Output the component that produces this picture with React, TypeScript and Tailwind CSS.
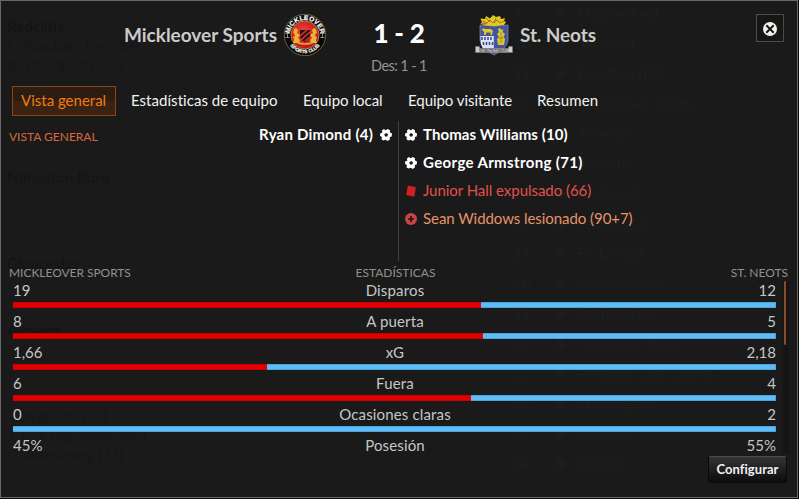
import clsx from 'clsx';

type Evento = {
  tipo: 'gol' | 'roja' | 'lesion';
  texto: string;
  className: string;
};

type Estadistica = {
  nombre: string;
  local: string;
  visitante: string;
  porcentaje: number | null;
};

const TABS = [
  { label: 'Vista general', className: 'w-[104px] pl-[8px]' },
  { label: 'Estadísticas de equipo', className: 'ml-[15px] w-[172px] tracking-[0.04px]' },
  { label: 'Equipo local', className: 'w-[105px]' },
  { label: 'Equipo visitante', className: 'w-[129px] tracking-[-0.05px]' },
  { label: 'Resumen', className: 'tracking-[0.15px]' },
];

const EVENTOS: Evento[] = [
  { tipo: 'gol', texto: 'Thomas Williams (10)', className: 'font-bold text-white tracking-[0.08px]' },
  { tipo: 'gol', texto: 'George Armstrong (71)', className: 'font-bold text-white tracking-[0.36px]' },
  { tipo: 'roja', texto: 'Junior Hall expulsado (66)', className: 'text-[#e2504c] tracking-[-0.04px]' },
  { tipo: 'lesion', texto: 'Sean Widdows lesionado (90+7)', className: 'text-[#e59468] tracking-[-0.06px]' },
];

const ESTADISTICAS: Estadistica[] = [
  { nombre: 'Disparos', local: '19', visitante: '12', porcentaje: (19 / 31) * 100 },
  { nombre: 'A puerta', local: '8', visitante: '5', porcentaje: (8 / 13) * 100 },
  { nombre: 'xG', local: '1,66', visitante: '2,18', porcentaje: (1 / 3) * 100 },
  { nombre: 'Fuera', local: '6', visitante: '4', porcentaje: 60 },
  { nombre: 'Ocasiones claras', local: '0', visitante: '2', porcentaje: 0 },
  { nombre: 'Posesión', local: '45%', visitante: '55%', porcentaje: null },
];

const CLASIFICACION = [
  'Macclesfield', 'Stratford', 'Bradford (PA)', 'Mickleover Sports', 'Alfreton', 'Radcliffe',
  'Nantwich', 'Leamington', 'FC United', 'South Shields', 'Scunthorpe', 'Nuneaton Boro',
  'Peterborough Sports', 'Warrington', 'Spalding', 'Chorley',
];

function Balon() {
  return (
    <svg width="12" height="12" viewBox="0 0 12 12" className="shrink-0">
      <path
        d="M3.900 0 5.600 1.300 7.800 0 10 1.200 9.800 3.200 12 4.600 11.700 7.400 9.800 8 9.900 10.500 7.600 12 5.800 10.700 3.400 11.500 1.400 10.300 2 8.200 0 6.800.3 4.300 2.300 3.800 1.900 1.500Z"
        fill="#fff"
      />
      <path d="M6.200 4 8 5.300 7.400 7.400H5L4.300 5.300Z" fill="#1a1a1a" />
    </svg>
  );
}

function IconoEvento({ tipo }: { tipo: Evento['tipo'] }) {
  if (tipo === 'gol') return <Balon />;
  if (tipo === 'roja') {
    return (
      <svg width="12" height="12" viewBox="0 0 12 12" className="shrink-0">
        <path d="M3 .5 10.900 2.200 9.200 11.700 1.200 10Z" fill="#d02020" />
      </svg>
    );
  }
  return (
    <svg width="12" height="12" viewBox="0 0 12 12" className="shrink-0">
      <circle cx="6" cy="6" r="6" fill="#cd4343" />
      <path d="M6 3v6M3 6h6" stroke="#1a1a1a" strokeWidth="1.7" />
    </svg>
  );
}

function EscudoLocal() {
  return (
    <svg width="44" height="44" viewBox="0 0 44 44" className="shrink-0">
      <defs>
        <radialGradient id="rojo" cx="45%" cy="40%">
          <stop offset="0" stopColor="#f04a42" />
          <stop offset="1" stopColor="#c9151d" />
        </radialGradient>
        <path id="arcoSup" d="M7 26A15.400 15.400 0 1 1 37 26" />
        <path id="arcoInf" d="M4.500 27A18.200 18.200 0 0 0 39.500 27" />
      </defs>
      <circle cx="22" cy="22" r="20.700" fill="#090909" stroke="#85713d" strokeWidth=".8" />
      <circle cx="22" cy="22" r="14" fill="url(#rojo)" stroke="#b99b50" strokeWidth=".8" />
      <text fill="#fff" stroke="#fff" strokeWidth=".2" fontSize="6.700" fontWeight="700" fontFamily="Liberation Sans, sans-serif">
        <textPath href="#arcoSup" startOffset="50%" textAnchor="middle">MICKLEOVER</textPath>
      </text>
      <text fill="#fff" stroke="#fff" strokeWidth=".15" fontSize="4.800" fontWeight="700" fontFamily="Liberation Sans, sans-serif">
        <textPath href="#arcoInf" startOffset="50%" textAnchor="middle">SPORTS CLUB</textPath>
      </text>
      <path d="M2.500 20.500h4M4.500 20.500v4M2.500 24.500h4M37.500 20.500h4M39.500 20.500v4M37.500 24.500h4" stroke="#aaa" strokeWidth=".8" />
      <path d="M17 17h10v6c0 3-2 5-5 6-3-1-5-3-5-6Z" fill="#25110f" />
      <path d="m17 23 7-6M18 27l9-8M22 28l5-4" stroke="#dc3830" strokeWidth="1.5" />
      <path d="m11 16 2-1 2 2-1 3 3 2-2 3 2 2-1 3h-6l1-3-1-3 2-1-1-3-1 1Z" fill="#e8b533" />
      <path d="m33 16-2-1-2 2 1 3-3 2 2 3-2 2 1 3h6l-1-3 1-3-2-1 1-3 1 1Z" fill="#e8b533" />
      <path d="M14 29.500q8 3 16 0" fill="none" stroke="#e0ab30" strokeWidth="1.4" />
    </svg>
  );
}

function EscudoVisitante() {
  return (
    <svg width="38" height="42" viewBox="0 0 38 42" className="shrink-0">
      <path d="M5.500 9.500 7 8 5.500 4.500 10 5 11 2l4 2.500L18 1l3 2 4-1 1 3 4-1-1 3 2 1-2 3-5 1H11Z" fill="#e3c81f" />
      <path d="m8 7 4 2 3-3 3 3 4-3 3 3 4-2M11 4l4 4M21 4l-2 5" fill="none" stroke="#866713" strokeWidth=".8" />
      <path d="M6 8.500h7l-2 2H7Z" fill="#c7713a" />
      <path d="M5 11q14 3 28 0v14c0 8-7 12-14 16C12 37 5 33 5 25Z" fill="#42559f" stroke="#8790ad" strokeWidth=".7" />
      <path d="M5.500 22h13.300v12H7.500Q5.500 30 5.500 25Z" fill="#dce3f0" />
      <path d="M7 23v3M10 23v3M13 23v3M16 23v3M8.500 28v3M11.500 28v3M14.500 28v3M17.500 28v3" stroke="#35478d" strokeWidth="1.5" />
      <path d="m8 14 2 1h6l2 2-1 4h-1.500v-2.500h-4l-1 2.500h-1.500v-3.500l-2-1Z" fill="#dfc725" />
      <path d="m25 14 1.500 2 2-1-1 3 2.500 2-1.500 3 1.500 2-1 6h-6l-1-6 2-2-2-3 2-2-1-3Z" fill="#ddc52c" />
      <path d="M26 18v11M23.500 24h5" stroke="#83752b" strokeWidth=".7" />
      <path d="M.5 32.500h4v2h29v-2h4v6h-37Z" fill="#ccc" stroke="#777" strokeWidth=".5" />
      <text x="19" y="38" textAnchor="middle" fontSize="3.300" fontWeight="700" fontFamily="Liberation Sans, sans-serif" fill="#444" textLength="30">ST. NEOTS TOWN F.C.</text>
    </svg>
  );
}

// League screen that stays barely visible under the dialog
function Fondo() {
  return (
    <div className="pointer-events-none absolute inset-0 overflow-hidden text-[15px] text-[#1e1e1e]">
      <div className="absolute left-[6px] top-[15px] whitespace-nowrap text-[#151515]">
        <p className="h-[20px] font-bold leading-[20px]">Radcliffe</p>
        <p className="h-[19px] leading-[19px] text-[#171717]">L. Peacham (pen 33)</p>
        <p className="h-[112px] leading-[19px] text-[#171717]">B. Thompson (38)</p>
        <p className="h-[86px] font-bold leading-[20px]">Nuneaton Boro</p>
        <p className="h-[67px] font-bold leading-[20px]">Gloucester</p>
        <p className="h-[87px] font-bold leading-[20px]">Alfreton</p>
        <p className="leading-[19px] text-[#171717]">T. Williams (10)</p>
        <p className="leading-[19px] text-[#171717]">J. Hall expulsado (66)</p>
        <p className="leading-[19px] text-[#171717]">G. Armstrong (71)</p>
      </div>
      <div className="absolute left-[512px] top-[-3px]">
        {CLASIFICACION.map((equipo, i) => (
          <div key={equipo} className="flex h-[30px] items-center whitespace-nowrap">
            <span className="w-[43px]">{i + 9}</span>
            <span className="mr-[12px] size-[9px] rounded-full bg-[#1d1d1d]" />
            <span>{equipo}</span>
          </div>
        ))}
      </div>
    </div>
  );
}

export default function App() {
  return (
    <div className="h-[499px] w-[799px] overflow-hidden bg-[#080808] font-['Lato','Open_Sans',sans-serif]">
      <div className="relative h-[498px] w-[798px] border border-[#686868] bg-[#1a1a1a]">
        <Fondo />
        <div className="relative flex h-full flex-col">
          <header className="flex h-[85px] items-start">
            <div className="flex h-[68px] w-[326px] items-center justify-end gap-[6px] text-[19px] font-bold text-[#cbcbcb]">
              <h2 className="whitespace-nowrap">Mickleover Sports</h2>
              <EscudoLocal />
            </div>
            <div className="flex w-[147px] flex-col items-center">
              <div className="mt-[15px] h-[34px] whitespace-nowrap pr-[3px] text-[26px] font-black leading-[34px] tracking-[-0.2px] text-white">1 - 2</div>
              <div className="mt-[6px] whitespace-nowrap pr-[3px] text-[14.5px] leading-[20px] tracking-[-0.6px] text-[#929292]">Des: 1 - 1</div>
            </div>
            <div className="flex h-[68px] items-center gap-[7px] pl-px text-[19px] font-bold text-[#cbcbcb]">
              <EscudoVisitante />
              <h2 className="whitespace-nowrap tracking-[-0.1px]">St. Neots</h2>
            </div>
            <button className="ml-auto mr-[13px] mt-[13px] flex size-[28px] items-center justify-center border border-[#4b4b4b] bg-[#171717]">
              <svg width="14" height="14" viewBox="0 0 14 14" className="mt-px">
                <circle cx="7" cy="7" r="7" fill="#f5f1e8" />
                <path d="m3.300 3.300 7.400 7.400M10.700 3.300l-7.400 7.400" stroke="#171717" strokeWidth="2" />
              </svg>
            </button>
          </header>

          <nav className="flex h-[30px] pl-[11px] text-[15px] text-[#f2f2f2]">
            {TABS.map((tab, i) => (
              <button
                key={tab.label}
                className={clsx(
                  'h-[30px] shrink-0 whitespace-nowrap pb-[1px] text-left',
                  tab.className,
                  i === 0 && 'border border-[#8b4513] bg-linear-to-b from-[#2b1d14] from-50% to-[#3b2313] to-50% text-[#f07c0c]'
                )}
              >
                {tab.label}
              </button>
            ))}
          </nav>

          <section className="mt-[5px] flex h-[140px] text-[15px]">
            <div className="flex w-[398px] items-start justify-between border-r border-[#404040] pl-[8px] pr-[6px]">
              <h3 className="mt-[6px] text-[12px] leading-[20px] text-[#db683a]">VISTA GENERAL</h3>
              <div className="flex h-[28px] items-center gap-[7px] font-bold text-white">
                <span className="pb-[1px] tracking-[0.22px]">Ryan Dimond (4)</span>
                <Balon />
              </div>
            </div>
            <ul className="pl-[6px]">
              {EVENTOS.map((e) => (
                <li key={e.texto} className={clsx('flex h-[28px] items-center gap-[6px] whitespace-nowrap', e.className)}>
                  <IconoEvento tipo={e.tipo} />
                  <span className="pb-[1px]">{e.texto}</span>
                </li>
              ))}
            </ul>
          </section>

          <div className="mt-[3px] grid h-[17px] grid-cols-3 pl-[8px] pr-[9px] text-[12px] leading-[18px] text-[#91918a]">
            <span className="tracking-[-0.04px]">MICKLEOVER SPORTS</span>
            <span className="pr-[6px] text-center">ESTADÍSTICAS</span>
            <span className="text-right">ST. NEOTS</span>
          </div>

          <section className="flex h-[174px] pl-[12px] text-[15px] text-[#c6c6c6]">
            <div className="w-[763px]">
              {ESTADISTICAS.map((s) => (
                <div key={s.nombre} className="h-[31px]">
                  <div className="grid h-[21px] grid-cols-3 leading-[18px]">
                    <span>{s.local}</span>
                    <span className="pl-px text-center tracking-[0.15px]">{s.nombre}</span>
                    <span className="text-right">{s.visitante}</span>
                  </div>
                  {s.porcentaje !== null && (
                    <div className="flex h-[6px] bg-[#61bbf5]">
                      <div className="h-full border-y border-[#c90000] bg-[#e20000]" style={{ width: `${s.porcentaje}%` }} />
                      <div className="h-full flex-1 border-y border-r border-[#4ba3dc]" />
                    </div>
                  )}
                </div>
              ))}
            </div>
            <div className="ml-[7px] h-[173px] w-[6px] bg-[#151515] pl-px">
              <div className="h-[64px] w-[2px] rounded-full bg-[#8b4932]" />
            </div>
          </section>

          <button className="ml-auto mr-[10px] mt-[1px] h-[27px] w-[79px] shrink-0 rounded-[3px] border border-[#0a0a0a] border-t-[#4b4b4b] bg-linear-to-b from-[#353535] to-[#0c0c0c] pt-[1px] text-[13px] font-bold tracking-[0.05px] text-[#f1f1f1]">
            Configurar
          </button>
        </div>
      </div>
    </div>
  );
}
